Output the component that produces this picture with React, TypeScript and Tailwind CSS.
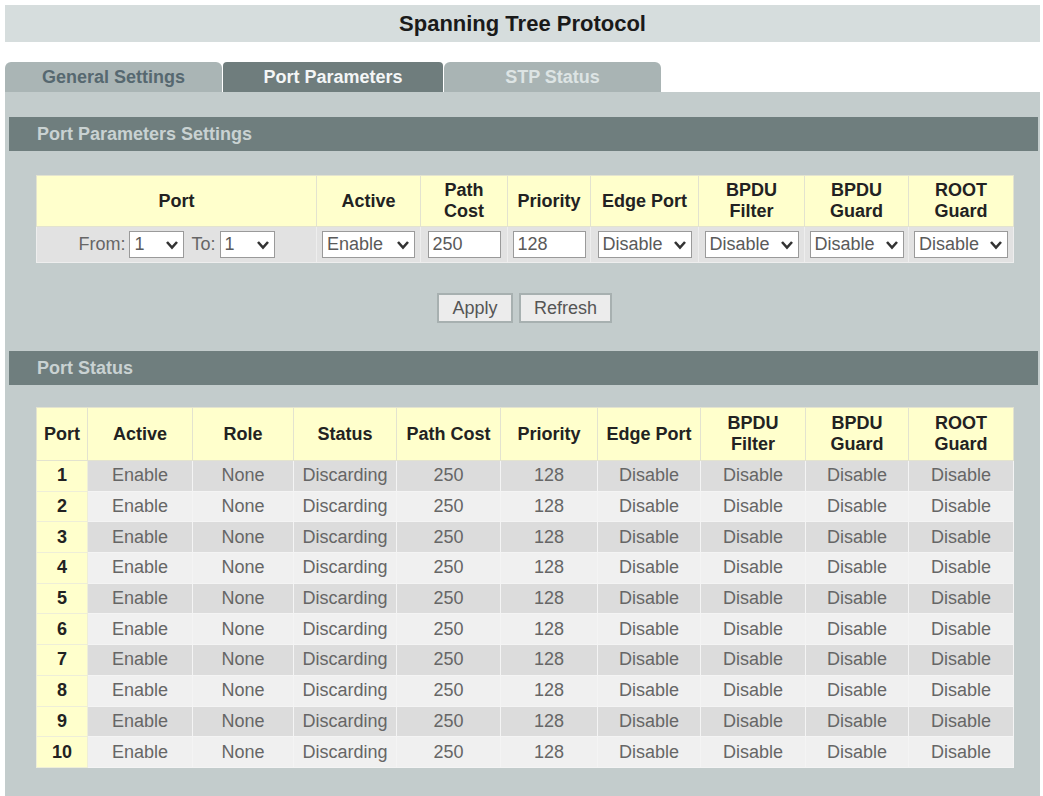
import { ReactNode } from "react";

const rows = Array.from({ length: 10 }, (_, i) => i + 1);

function Chevron() {
  return (
    <svg width="14" height="10" viewBox="0 0 14 10" className="shrink-0">
      <polyline points="2,2 7,7.5 12,2" fill="none" stroke="#333" strokeWidth="2.6" />
    </svg>
  );
}

function FakeSelect({ value, w }: { value: string; w: string }) {
  return (
    <span
      className={`${w} h-[27px] inline-flex items-center justify-between border border-[#9a9a9a] bg-white pl-[4px] pr-[4px] text-[#5a5a5a]`}
    >
      <span>{value}</span>
      <Chevron />
    </span>
  );
}

function FakeInput({ value }: { value: string }) {
  return (
    <span className="w-[73px] h-[27px] inline-flex items-center border border-[#9a9a9a] bg-white pl-[4px] text-[#5a5a5a]">
      {value}
    </span>
  );
}

function SectionBar({ children }: { children: ReactNode }) {
  return (
    <div className="ml-[4px] mr-[2px] h-[34px] flex items-center bg-[#6f7e7e] pl-[28px] text-[18px] font-bold text-[#c9d2d2]">
      {children}
    </div>
  );
}

function Th({ children }: { children: ReactNode }) {
  return (
    <th className="border border-[#e3e3cf] bg-[#ffffcc] font-bold text-[#222] leading-[21px] text-center">
      {children}
    </th>
  );
}

export default function App() {
  return (
    <div className="min-h-screen bg-white font-['Liberation_Sans',Arial,sans-serif] text-[18px]">
      <div className="pt-[5px] pl-[5px] pr-[3px]">
        <div className="h-[37px] flex items-center justify-center bg-[#d6dddd] text-[22px] font-bold text-[#1a1a1a]">
          Spanning Tree Protocol
        </div>
      </div>

      {/* tabs */}
      <div className="mt-[20px] pl-[5px] flex gap-px">
        <div className="w-[217px] h-[30px] rounded-t-[6px] bg-[#aab5b5] flex items-center justify-center font-bold text-[#566870]">
          General Settings
        </div>
        <div className="w-[220px] h-[30px] rounded-t-[4px] bg-[#6f7d7d] flex items-center justify-center font-bold text-[#f4f6f6]">
          Port Parameters
        </div>
        <div className="w-[217px] h-[30px] rounded-t-[6px] bg-[#a9b4b4] flex items-center justify-center font-bold text-[#dde4e4]">
          STP Status
        </div>
      </div>

      <div className="ml-[5px] mr-[3px] bg-[#c3cccc] pt-[25px] pb-[29px]">
        <SectionBar>Port Parameters Settings</SectionBar>

        <table className="mt-[24px] ml-[31px] w-[977px] table-fixed border-collapse">
          <colgroup>
            <col className="w-[280px]" />
            <col className="w-[104px]" />
            <col className="w-[87px]" />
            <col className="w-[83px]" />
            <col className="w-[108px]" />
            <col className="w-[106px]" />
            <col className="w-[104px]" />
            <col className="w-[105px]" />
          </colgroup>
          <thead>
            <tr className="h-[51px]">
              <Th>Port</Th>
              <Th>Active</Th>
              <Th>
                Path
                <br />
                Cost
              </Th>
              <Th>Priority</Th>
              <Th>Edge Port</Th>
              <Th>
                BPDU
                <br />
                Filter
              </Th>
              <Th>
                BPDU
                <br />
                Guard
              </Th>
              <Th>
                ROOT
                <br />
                Guard
              </Th>
            </tr>
          </thead>
          <tbody>
            <tr className="h-[36px] bg-[#e2e2e2] text-[#666]">
              <td className="border border-[#eeeeee] text-center">
                <span className="inline-flex items-center gap-[4px]">
                  From: <FakeSelect value="1" w="w-[55px]" />
                  <span className="ml-[3px]">To:</span> <FakeSelect value="1" w="w-[55px]" />
                </span>
              </td>
              <td className="border border-[#eeeeee] text-center">
                <FakeSelect value="Enable" w="w-[93px]" />
              </td>
              <td className="border border-[#eeeeee] text-center">
                <FakeInput value="250" />
              </td>
              <td className="border border-[#eeeeee] text-center">
                <FakeInput value="128" />
              </td>
              {[0, 1, 2, 3].map((i) => (
                <td key={i} className="border border-[#eeeeee] text-center">
                  <FakeSelect value="Disable" w="w-[94px]" />
                </td>
              ))}
            </tr>
          </tbody>
        </table>

        <div className="mt-[30px] flex justify-center gap-[6px] pl-[4px]">
          <button className="w-[76px] h-[30px] border-2 border-[#a7b0b0] bg-[#ececec] text-[#555]">Apply</button>
          <button className="w-[93px] h-[30px] border-2 border-[#a7b0b0] bg-[#ececec] text-[#555]">Refresh</button>
        </div>

        <div className="mt-[28px]">
          <SectionBar>Port Status</SectionBar>
        </div>

        <table className="mt-[22px] ml-[31px] w-[977px] table-fixed border-collapse">
          <colgroup>
            <col className="w-[51px]" />
            <col className="w-[105px]" />
            <col className="w-[101px]" />
            <col className="w-[103px]" />
            <col className="w-[104px]" />
            <col className="w-[97px]" />
            <col className="w-[103px]" />
            <col className="w-[105px]" />
            <col className="w-[103px]" />
            <col className="w-[105px]" />
          </colgroup>
          <thead>
            <tr className="h-[53px]">
              <Th>Port</Th>
              <Th>Active</Th>
              <Th>Role</Th>
              <Th>Status</Th>
              <Th>Path Cost</Th>
              <Th>Priority</Th>
              <Th>Edge Port</Th>
              <Th>
                BPDU
                <br />
                Filter
              </Th>
              <Th>
                BPDU
                <br />
                Guard
              </Th>
              <Th>
                ROOT
                <br />
                Guard
              </Th>
            </tr>
          </thead>
          <tbody>
            {rows.map((n) => (
              <tr
                key={n}
                className={`h-[30.7px] text-center text-[#666] ${n % 2 === 1 ? "bg-[#dcdcdc]" : "bg-[#f0f0f0]"}`}
              >
                <td className="border border-[#eeeed8] bg-[#ffffcc] font-bold text-[#222]">{n}</td>
                <td className="border border-[#f4f4f4]">Enable</td>
                <td className="border border-[#f4f4f4]">None</td>
                <td className="border border-[#f4f4f4]">Discarding</td>
                <td className="border border-[#f4f4f4]">250</td>
                <td className="border border-[#f4f4f4]">128</td>
                <td className="border border-[#f4f4f4]">Disable</td>
                <td className="border border-[#f4f4f4]">Disable</td>
                <td className="border border-[#f4f4f4]">Disable</td>
                <td className="border border-[#f4f4f4]">Disable</td>
              </tr>
            ))}
          </tbody>
        </table>
      </div>
    </div>
  );
}
